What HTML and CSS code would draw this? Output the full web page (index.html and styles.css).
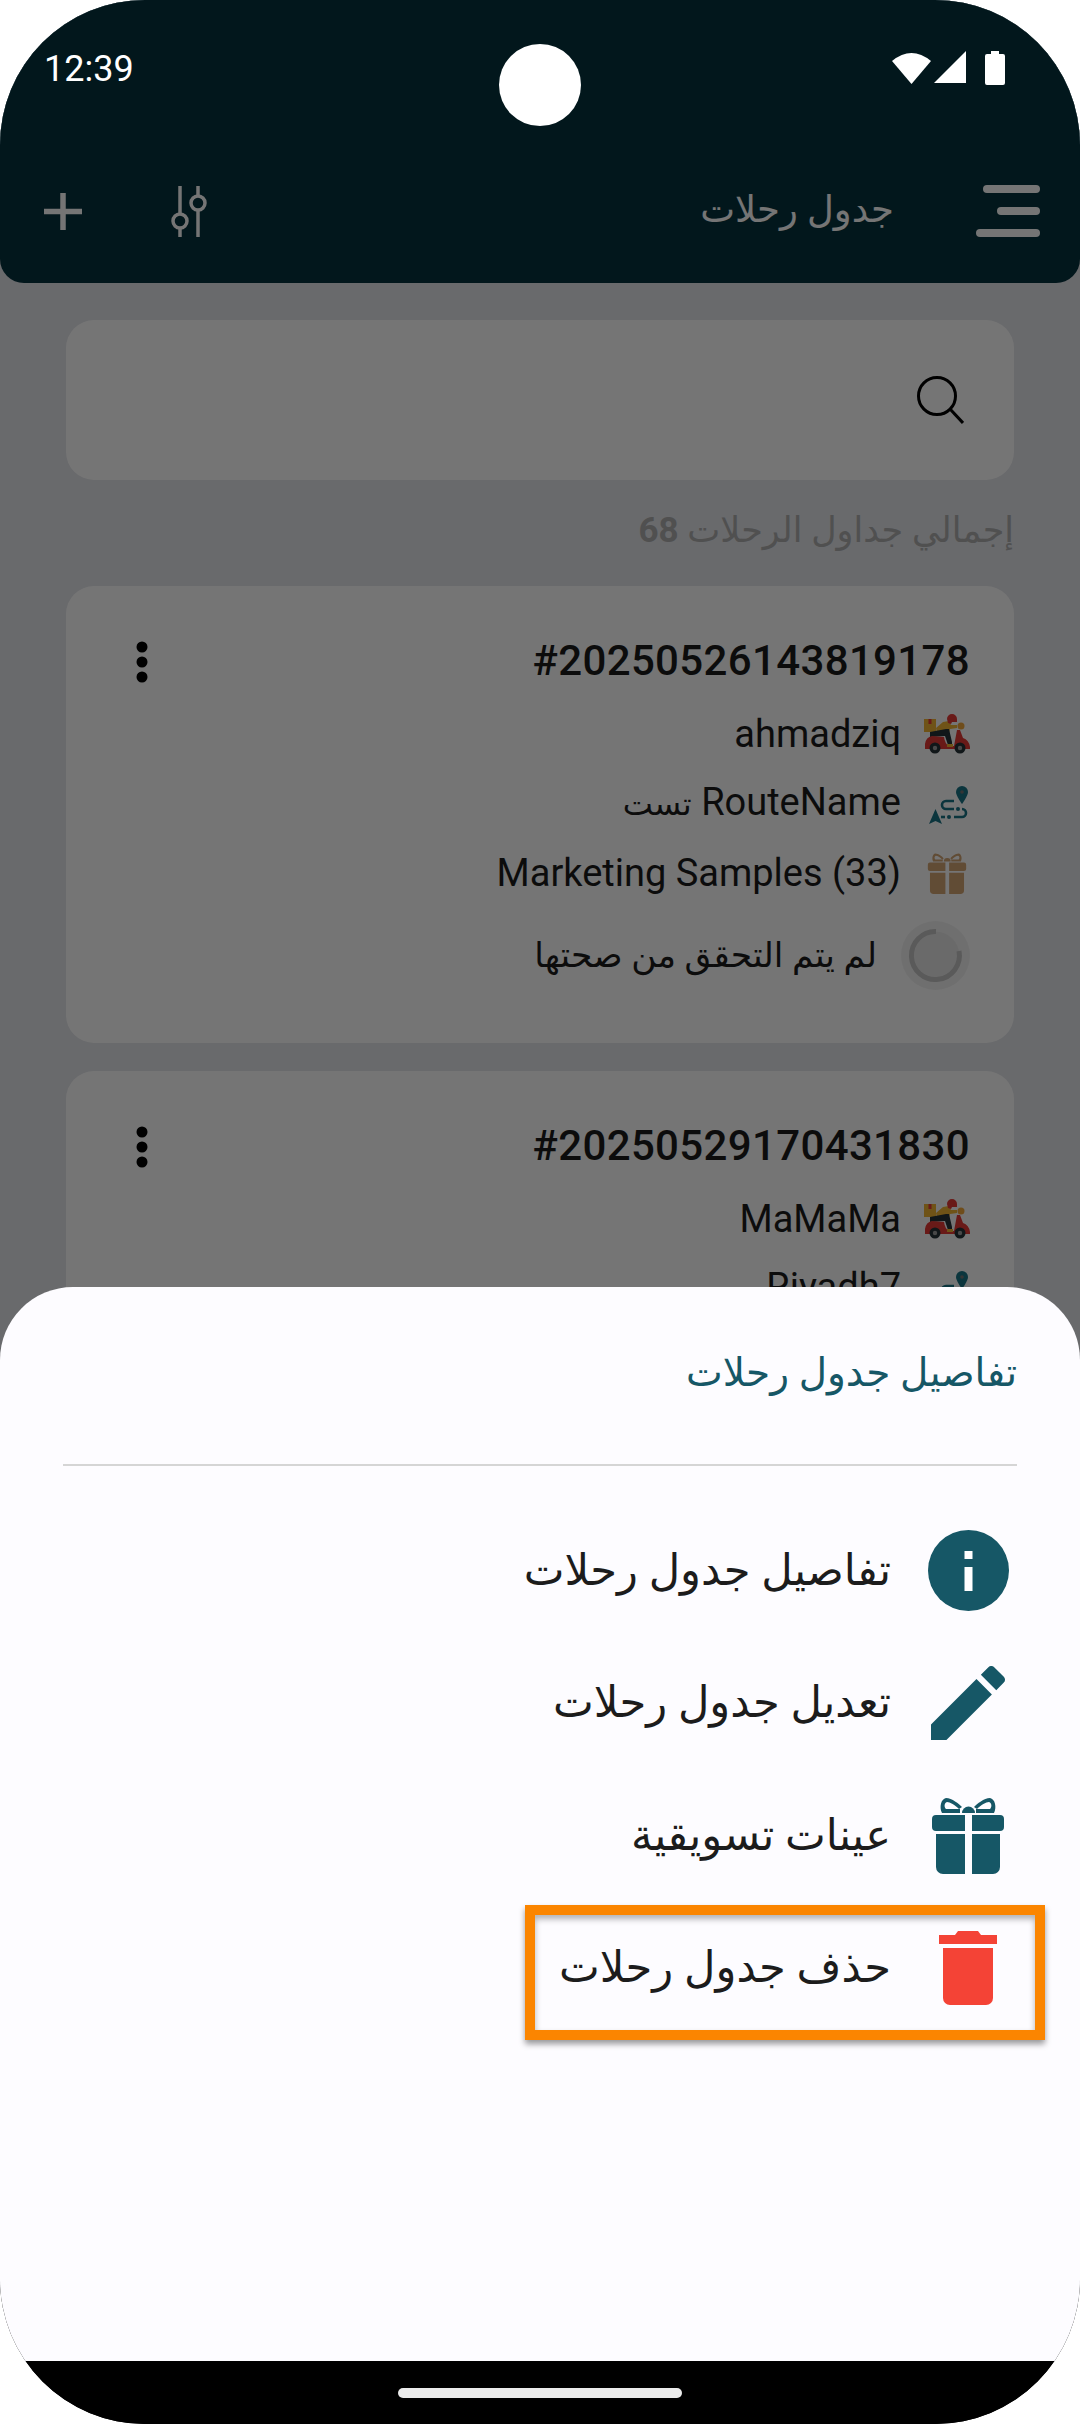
FILE: index.html
```html
<!DOCTYPE html>
<html lang="ar" dir="rtl">
<head>
  <meta charset="UTF-8">
  <meta name="viewport" content="width=device-width, initial-scale=1.0">
  <title>جدول رحلات</title>
  <link rel="stylesheet" href="styles.css">
</head>
<body>

  <svg class="defs" width="0" height="0">
    <symbol id="scooter" viewBox="0 0 46 41">
      <rect x="0" y="5" width="12" height="13" fill="#f2b632"/>
      <rect x="4.500" y="5" width="3" height="5" fill="#e53935"/>
      <path d="M12 14 L19 8 L25 7 L27 11 L33 11 L33 14 L26 15 L25 19 L13 19Z" fill="#f2b632"/>
      <path d="M23 5 a5 5 0 0 1 10 0 L33 8 L28 8 L27 10 L24 9Z" fill="#e53935"/>
      <circle cx="37" cy="12" r="3.500" fill="#f2a93b"/>
      <path d="M6 18 L22 15 L25 15 L28 28 L28 31 L24 31 L21 22 L6 23Z" fill="#263238"/>
      <path d="M1 30 Q2 23 8 22 L20 23 Q21 30 25 32 L30 32 L33 16 L36 16 L39 24 Q45 26 46 33 L46 35 H1Z" fill="#e53935"/>
      <rect x="23" y="30" width="6" height="3" fill="#f2b632"/>
      <circle cx="11" cy="34" r="5.500" fill="#263238"/>
      <circle cx="11" cy="34" r="2.200" fill="#9e9e9e"/>
      <circle cx="36" cy="34" r="5.500" fill="#263238"/>
      <circle cx="36" cy="34" r="2.200" fill="#9e9e9e"/>
    </symbol>
    <symbol id="route" viewBox="0 0 39 39">
      <path d="M33 0 a6 6 0 0 1 6 6 c0 4 -6 12 -6 12 s-6 -8 -6 -12 a6 6 0 0 1 6 -6z" fill="#1a7486"/>
      <circle cx="33" cy="6" r="1.800" fill="#757575"/>
      <path d="M6.500 23 L13 38 L6.500 35 L0 38Z" fill="#1a7486"/>
      <path d="M25 15 H17 a4 4 0 0 0 0 8 H25 M33 23 a4 4 0 0 1 0 8 H25" fill="none" stroke="#1a7486" stroke-width="2.600"/>
      <circle cx="29" cy="23" r="2" fill="#1a7486"/>
      <circle cx="20" cy="31" r="2" fill="#1a7486"/>
      <path d="M12 31 H16" fill="none" stroke="#1a7486" stroke-width="2.600"/>
    </symbol>
    <symbol id="gift" viewBox="0 0 72 77">
      <path d="M0 22 a4 4 0 0 1 4 -4 H33 V34 H4 a4 4 0 0 1 -4 -4z M40 18 H68 a4 4 0 0 1 4 4 V30 a4 4 0 0 1 -4 4 H40z"/>
      <path d="M4 37 H33 V77 H11 a7 7 0 0 1 -7 -7z M40 37 H68 V70 a7 7 0 0 1 -7 7 H40z"/>
      <path d="M30 16 a6.500 6.500 0 0 1 13 0z"/>
      <path d="M10 16 C7 10 9 2 14 1 C20 1 27 7 30 10 L27 12 C23 8 18 5 15 5 C12 6 12 10 14 12 L28 12 V16z"/>
      <path d="M62 16 C65 10 63 2 58 1 C52 1 45 7 42 10 L45 12 C49 8 54 5 57 5 C60 6 60 10 58 12 L44 12 V16z"/>
    </symbol>
    <symbol id="dots" viewBox="0 0 12 42">
      <circle cx="6" cy="6" r="5.500"/>
      <circle cx="6" cy="21" r="5.500"/>
      <circle cx="6" cy="36" r="5.500"/>
    </symbol>
  </svg>

  <div class="phone">
    <div class="screen">
      <div class="appbar">
        <div class="toolbar">
          <div class="burger"><span class="bar1"></span><span class="bar2"></span><span class="bar3"></span></div>
          <div class="apptitle">جدول رحلات</div>
          <svg class="sliders" viewBox="0 0 36 51" width="36" height="51">
            <path d="M9 0V51M27 0V51" fill="none" stroke="#fff" stroke-width="3.500"/>
            <circle cx="9" cy="35" r="7" fill="#06323d" stroke="#fff" stroke-width="3.500"/>
            <circle cx="27" cy="17" r="7" fill="#06323d" stroke="#fff" stroke-width="3.500"/>
          </svg>
          <svg class="plus" viewBox="0 0 38 37" width="38" height="37">
            <path d="M19 0V37M0 18.500H38" fill="none" stroke="#fff" stroke-width="5.500"/>
          </svg>
        </div>
      </div>

      <div class="content">
        <div class="search">
          <svg viewBox="0 0 47 48" width="47" height="48">
            <circle cx="20" cy="20" r="18.500" fill="none" stroke="#000" stroke-width="3"/>
            <path d="M33 33L46 47" fill="none" stroke="#000" stroke-width="3"/>
          </svg>
        </div>
        <div class="total">إجمالي جداول الرحلات <b>68</b></div>

        <div class="card">
          <div class="cardhead">
            <div class="tripno">#20250526143819178</div>
            <svg class="more" width="12" height="42"><use href="#dots"/></svg>
          </div>
          <div class="row row-driver">
            <svg class="rowicon" width="46" height="41"><use href="#scooter"/></svg>
            <span>ahmadziq</span>
          </div>
          <div class="row row-route">
            <svg class="rowicon routeicon" width="39" height="39"><use href="#route"/></svg>
            <span>RouteName <span class="routear">تست</span></span>
          </div>
          <div class="row row-gift">
            <svg class="rowicon gifticon" width="38" height="41"><use href="#gift"/></svg>
            <span>Marketing Samples (33)</span>
          </div>
          <div class="row row-status">
            <svg class="spinner" viewBox="0 0 69 69" width="69" height="69">
              <circle cx="34.500" cy="34.500" r="34.500" fill="#000" fill-opacity=".05"/>
              <circle cx="34.500" cy="34.500" r="24" fill="#000" fill-opacity=".04"/>
              <path d="M35 10.500A24 24 0 1 0 58 30" fill="none" stroke="#c4c4c4" stroke-width="5"/>
            </svg>
            <span class="statustext">لم يتم التحقق من صحتها</span>
          </div>
        </div>

        <div class="card">
          <div class="cardhead">
            <div class="tripno">#20250529170431830</div>
            <svg class="more" width="12" height="42"><use href="#dots"/></svg>
          </div>
          <div class="row row-driver">
            <svg class="rowicon" width="46" height="41"><use href="#scooter"/></svg>
            <span>MaMaMa</span>
          </div>
          <div class="row row-route">
            <svg class="rowicon routeicon" width="39" height="39"><use href="#route"/></svg>
            <span>Riyadh7</span>
          </div>
        </div>
      </div>

      <div class="scrim"></div>

      <div class="sheet">
        <div class="sheettitle">تفاصيل جدول رحلات</div>
        <div class="divider"></div>
        <div class="item">
          <div class="itemicon">
            <svg viewBox="0 0 81 81" width="81" height="81">
              <circle cx="40.500" cy="40.500" r="40.500" fill="#165766"/>
              <rect x="36.500" y="21" width="8" height="8" fill="#fff"/>
              <rect x="36.500" y="37" width="8" height="24" fill="#fff"/>
            </svg>
          </div>
          <span>تفاصيل جدول رحلات</span>
        </div>
        <div class="item">
          <div class="itemicon">
            <svg viewBox="3 3 18 18" width="74" height="74">
              <path fill="#165766" d="M3 17.250V21h3.750L17.810 9.940l-3.750-3.750L3 17.250zM20.710 7.040c.39-.39.39-1.020 0-1.410l-2.340-2.340c-.39-.39-1.020-.39-1.410 0l-1.830 1.830 3.750 3.750 1.830-1.830z"/>
            </svg>
          </div>
          <span>تعديل جدول رحلات</span>
        </div>
        <div class="item">
          <div class="itemicon">
            <svg class="sheetgift" width="72" height="77"><use href="#gift"/></svg>
          </div>
          <span>عينات تسويقية</span>
        </div>
        <div class="item">
          <div class="itemicon">
            <svg viewBox="0 0 58 74" width="58" height="74">
              <path fill="#f44336" d="M0 4H16L19 0H39L42 4H58V13H0z"/>
              <path fill="#f44336" d="M4 17H54V67a7 7 0 0 1 -7 7H11a7 7 0 0 1 -7 -7z"/>
            </svg>
          </div>
          <span>حذف جدول رحلات</span>
        </div>
        <div class="highlight"></div>
      </div>
    </div>

    <div class="navbar"><div class="handle"></div></div>

    <!-- system bar sits above the scrim -->
    <div class="statusbar">
      <span class="clock">12:39</span>
      <div class="sysicons">
        <svg viewBox="0 0 39 33" width="39" height="33"><path fill="#fff" d="M0 10Q19.500-6 39 10L19.500 33Z"/></svg>
        <svg viewBox="0 0 32 32" width="32" height="32"><path fill="#fff" d="M32 0V32H0Z"/></svg>
        <svg viewBox="0 0 20 34" width="20" height="34"><path fill="#fff" d="M6 0H14V3H18a2 2 0 0 1 2 2V32a2 2 0 0 1 -2 2H2a2 2 0 0 1 -2 -2V5a2 2 0 0 1 2 -2H6Z"/></svg>
      </div>
    </div>
    <div class="camera"></div>
  </div>

</body>
</html>
```

FILE: styles.css
```css
body{
  margin: 0;
  background-color: #ffffff;
  font-family: Roboto, 'DejaVu Sans', sans-serif;
}
.defs{
  position: absolute;
}
.phone{
  position: relative;
  display: flex;
  flex-direction: column;
  width: 1080px;
  height: 2424px;
  border-radius: 145px;
  overflow: hidden;
  background-color: #000000;
}
.screen{
  position: relative;
  flex: 1;
  overflow: hidden;
  background-color: #e4e6eb;
}

/* top bar */
.appbar{
  height: 283px;
  padding-top: 181px;
  box-sizing: border-box;
  border-radius: 0 0 24px 24px;
  background-color: #06323d;
  color: #ffffff;
}
.toolbar{
  display: flex;
  align-items: center;
  height: 60px;
  padding: 0 40px 0 44px;
}
.burger{
  display: flex;
  flex-direction: column;
  align-items: flex-start;
  gap: 14px;
  width: 64px;
  margin-left: 82px;
}
.burger span{
  display: block;
  height: 8px;
  border-radius: 4px;
  background-color: #ffffff;
}
.bar1{ width: 57px; }
.bar2{ width: 43px; }
.bar3{ width: 64px; }
.apptitle{
  font-size: 37px;
  line-height: 50px;
  margin-top: -2px;
}
.sliders{
  margin-right: auto;
  margin-left: 89px;
}

/* list */
.content{
  padding: 37px 66px 0;
}
.search{
  display: flex;
  align-items: center;
  height: 160px;
  padding-right: 50px;
  box-sizing: border-box;
  border-radius: 28px;
  background-color: #ffffff;
}
.total{
  margin: 31px 0 35px;
  font-size: 35px;
  line-height: 40px;
  color: #aeaeae;
}
.card{
  height: 457px;
  margin-bottom: 28px;
  padding: 49px 44px 0;
  box-sizing: border-box;
  border-radius: 28px;
  background-color: #ffffff;
  color: #1c1c1c;
}
.cardhead{
  display: flex;
  justify-content: space-between;
  align-items: center;
  height: 50px;
  padding-left: 26px;
}
.tripno{
  font-size: 42px;
  font-weight: 500;
  letter-spacing: 0.35px;
  direction: ltr;
}
.more{
  margin-top: 3px;
}
.row{
  display: flex;
  align-items: center;
  height: 60px;
  font-size: 38px;
}
.row-driver{ margin-top: 19px; }
.row-route{ margin-top: 8px; }
.row-gift{ margin-top: 11px; }
.row-status{
  height: 70px;
  margin-top: 17px;
}
.rowicon{
  flex: none;
  width: 46px;
  margin-left: 23px;
}
.routeicon{
  margin-top: 6px;
  padding-left: 3px;
  box-sizing: border-box;
}
.routear{
  font-size: 32px;
}
.gifticon{
  fill: #d3a574;
}
.spinner{
  flex: none;
  margin-left: 24px;
}
.statustext{
  font-size: 34.500px;
}

/* dim layer and bottom sheet */
.scrim{
  position: absolute;
  inset: 0;
  background-color: rgba(0,0,0,0.54);
}
.sheet{
  position: absolute;
  left: 0;
  right: 0;
  bottom: 0;
  height: 1074px;
  padding: 61px 63px 0;
  box-sizing: border-box;
  border-radius: 73px 73px 0 0;
  background-color: #fdfcff;
}
.sheettitle{
  font-size: 39px;
  line-height: 50px;
  color: #165766;
}
.divider{
  height: 2px;
  margin: 66px 0 38px;
  background-color: #d5d5d5;
}
.item{
  display: flex;
  align-items: center;
  height: 132.500px;
  padding-right: 7px;
  font-size: 43.300px;
  color: #1c1c1c;
}
.itemicon{
  display: flex;
  justify-content: center;
  flex: none;
  width: 84px;
  margin-left: 35px;
}
.sheetgift{
  fill: #165766;
}
/* orange marker drawn on top of the screenshot */
.highlight{
  position: absolute;
  top: 618px;
  left: 525px;
  width: 520px;
  height: 135px;
  box-sizing: border-box;
  border: 10px solid #fb8500;
  box-shadow: 0 4px 6px rgba(0,0,0,0.4), inset 0 4px 6px rgba(0,0,0,0.3);
}

.navbar{
  height: 63px;
  padding-top: 27px;
  box-sizing: border-box;
  background-color: #000000;
}
.handle{
  width: 284px;
  height: 10px;
  margin: 0 auto;
  border-radius: 5px;
  background-color: #ebebeb;
}
.statusbar{
  position: absolute;
  top: 0;
  left: 44px;
  right: 75px;
  display: flex;
  flex-direction: row-reverse;
  justify-content: space-between;
  align-items: flex-start;
  direction: rtl;
  color: #ffffff;
}
.clock{
  margin-top: 48px;
  font-size: 36px;
  line-height: 42px;
}
.sysicons{
  display: flex;
  flex-direction: row-reverse;
  align-items: flex-start;
  margin-top: 51px;
}
.sysicons svg:nth-child(1){ margin-right: 3px; }
.sysicons svg:nth-child(2){ margin-right: 19px; }
.camera{
  position: absolute;
  top: 44px;
  left: 499px;
  width: 82px;
  height: 82px;
  border-radius: 50%;
  background-color: #ffffff;
}
```
